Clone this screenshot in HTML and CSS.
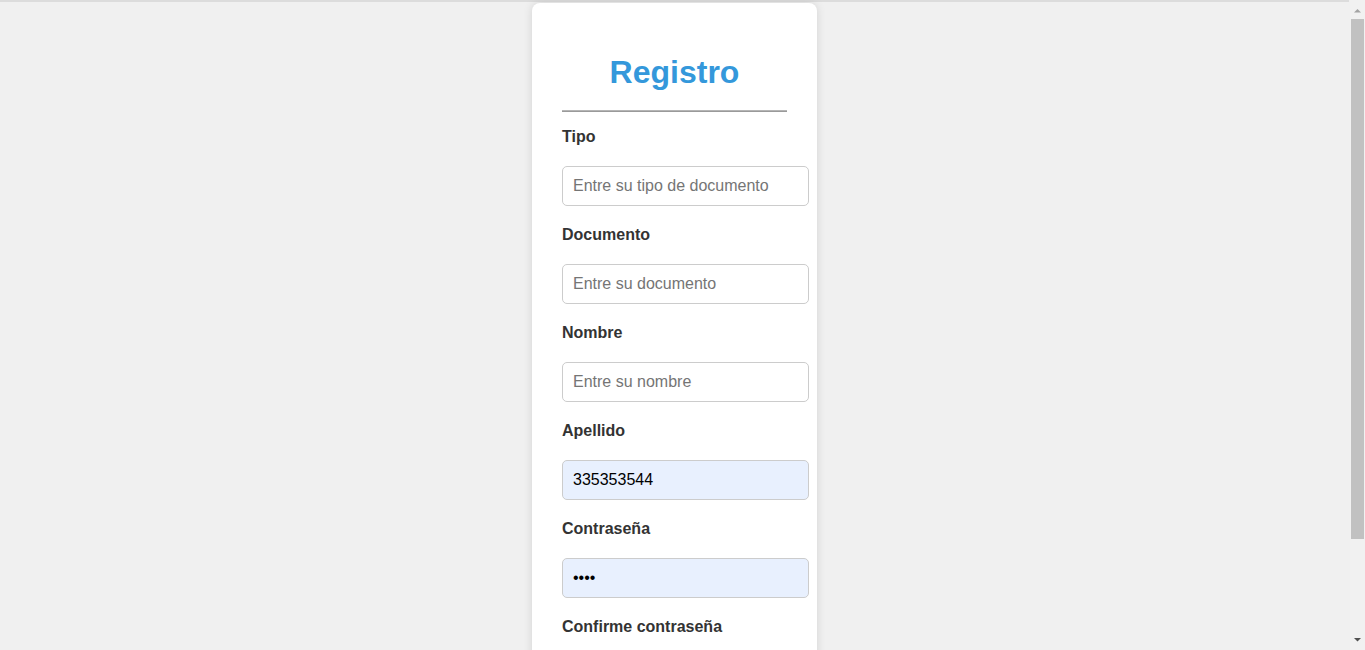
FILE: index.html
```html
<!DOCTYPE html>
<html lang="es">
<head>
<meta charset="utf-8">
<title>Registro</title>
<link rel="stylesheet" href="styles.css">
</head>
<body>
<div class="topline"></div>
<main class="page">
  <form class="card">
    <h1 class="title">Registro</h1>
    <hr class="divider">
    <label class="label" for="tipo">Tipo</label>
    <input class="field" id="tipo" type="text" placeholder="Entre su tipo de documento">
    <label class="label" for="doc">Documento</label>
    <input class="field" id="doc" type="text" placeholder="Entre su documento">
    <label class="label" for="nombre">Nombre</label>
    <input class="field" id="nombre" type="text" placeholder="Entre su nombre">
    <label class="label" for="apellido">Apellido</label>
    <input class="field filled" id="apellido" type="text" value="335353544">
    <label class="label" for="pass">Contraseña</label>
    <input class="field filled" id="pass" type="password" value="1234">
    <label class="label" for="pass2">Confirme contraseña</label>
    <input class="field" id="pass2" type="password" placeholder="Confirme su contraseña">
    <button class="btn" type="button">Registrarse</button>
  </form>
</main>
<div class="scrollbar" aria-hidden="true">
  <svg class="sb-arrow" width="15" height="17" viewBox="0 0 15 17"><path d="M4 12.5 L7.5 9 L11 12.5 Z" fill="#a3a3a3"/></svg>
  <div class="sb-track"><div class="sb-thumb"></div></div>
  <svg class="sb-arrow" width="15" height="17" viewBox="0 0 15 17"><path d="M4 5 L11 5 L7.5 8.5 Z" fill="#505050"/></svg>
</div>
</body>
</html>
```

FILE: styles.css
```css
html, body {
  margin: 0;
  padding: 0;
}
body {
  background: #f0f0f0;
  font-family: "Liberation Sans", Arial, sans-serif;
  padding-right: 16px;
}
.topline {
  height: 2px;
  background: #dcdcdc;
}
.page {
  display: flex;
  justify-content: center;
  padding-top: 1px;
  padding-bottom: 3px;
}
.card {
  width: 225px;
  padding: 30px 30px 14px;
  background: #fff;
  border-radius: 8px;
  box-shadow: 0 0 10px rgba(0, 0, 0, 0.12);
  display: flex;
  flex-direction: column;
  align-items: flex-start;
}
.title {
  align-self: stretch;
  text-align: center;
  margin: 21px 0 19px;
  font-size: 32px;
  font-weight: bold;
  color: #3498db;
}
.divider {
  align-self: stretch;
  margin: 0 0 16px;
  border: 0;
  border-top: 1px solid #b5b5b5;
  border-bottom: 1px solid #9a9a9a;
  height: 0;
}
.label {
  display: block;
  font-size: 16px;
  font-weight: bold;
  color: #333;
  margin-bottom: 20px;
}
.field {
  display: block;
  width: 225px;
  padding: 10px;
  margin: 0 0 20px;
  border: 1px solid #ccc;
  border-radius: 5px;
  font-family: "Liberation Sans", Arial, sans-serif;
  font-size: 16px;
  color: #000;
  background: #fff;
}
.field::placeholder {
  color: #757575;
}
.filled {
  background: #e8f0fe;
}
.btn {
  align-self: stretch;
  height: 40px;
  border: 0;
  border-radius: 5px;
  background: #3498db;
  color: #fff;
  font-size: 16px;
  font-family: "Liberation Sans", Arial, sans-serif;
}
.scrollbar {
  position: fixed;
  top: 0;
  right: 0;
  width: 15px;
  height: 100vh;
  background: #f1f1f1;
  display: flex;
  flex-direction: column;
}
.sb-arrow {
  display: block;
  flex: none;
}
.sb-track {
  flex: 1;
  padding: 2px 1px 0 1px;
}
.sb-thumb {
  height: 520px;
  width: 13px;
  background: #c1c1c1;
}
```
